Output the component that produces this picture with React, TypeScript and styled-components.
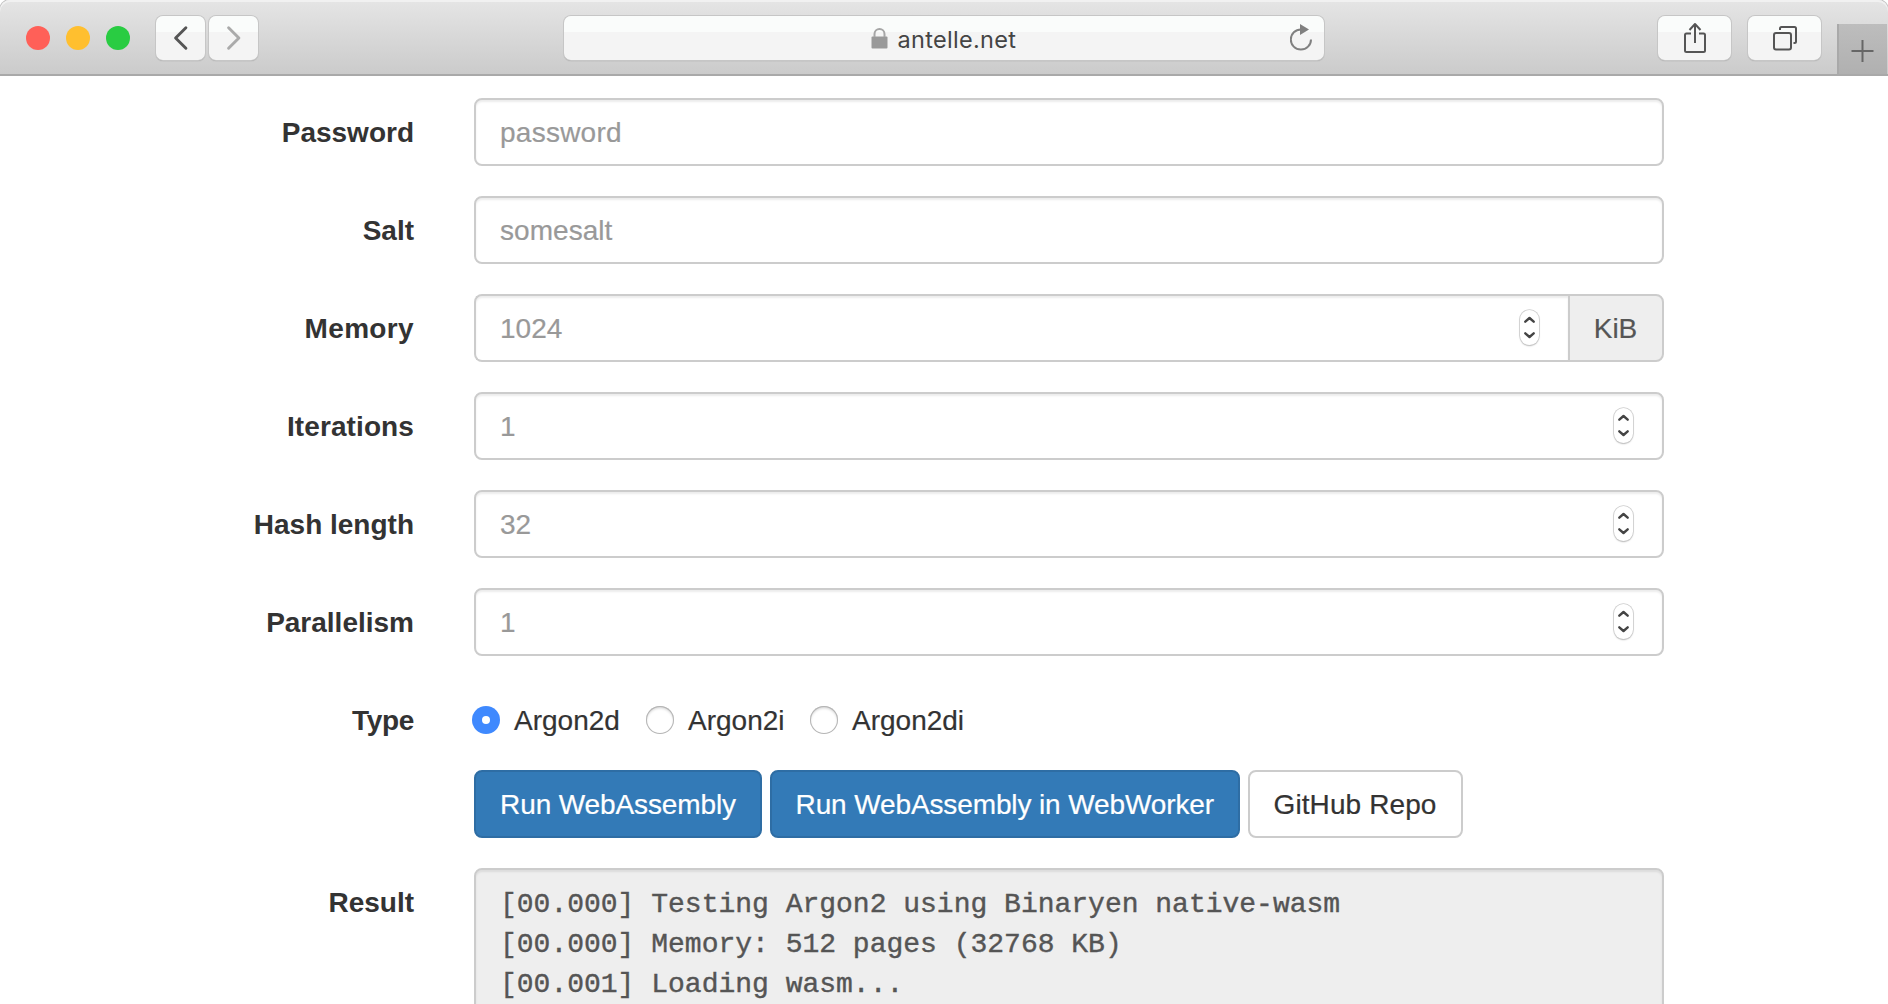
import React from 'react';
import styled, { createGlobalStyle } from 'styled-components';

const GlobalStyle = createGlobalStyle`
  *, *::before, *::after { box-sizing: border-box; }
  html, body { margin: 0; padding: 0; background: #fff; overflow: hidden; }
  body {
    font-family: "Liberation Sans", Arial, sans-serif;
    font-size: 28px;
    line-height: 40px;
    color: #333;
  }
`;

const Window = styled.div`
  width: 1888px;
  height: 1004px;
  overflow: hidden;
  display: flex;
  flex-direction: column;
`;

const Toolbar = styled.header`
  flex: none;
  height: 76px;
  display: flex;
  align-items: flex-start;
  padding-left: 26px;
  background: linear-gradient(#e5e5e5, #cbcbcb);
  border-bottom: 2px solid #a9a9a9;
  border-radius: 10px 10px 0 0;
  box-shadow: inset 0 2px 0 #f1f1f1, 0 0 0 1px #c4c4c4;
  clip-path: inset(0);
`;

const Lights = styled.div`
  display: flex;
  gap: 16px;
  margin-top: 26px;
`;

const Light = styled.span<{ $color: string }>`
  width: 24px;
  height: 24px;
  border-radius: 50%;
  background: ${(p) => p.$color};
`;

const ToolButton = styled.button<{ $width: number; $left: number }>`
  flex: none;
  width: ${(p) => p.$width}px;
  height: 44px;
  margin: 16px 0 0 ${(p) => p.$left}px;
  padding: 0;
  border: 0;
  border-radius: 7px;
  display: flex;
  align-items: center;
  justify-content: center;
  background: linear-gradient(#fafcfb 0 36%, #f4f4f4 37%);
  box-shadow: 0 0 0 1px #c6c6c6, 0 1px 1px #888;
`;

const AddressBar = styled.div`
  flex: none;
  width: 760px;
  height: 44px;
  margin: 16px 0 0 306px;
  border-radius: 7px;
  display: flex;
  align-items: center;
  padding: 0 10px 0 307px;
  background: linear-gradient(#fafcfb 0 36%, #f4f4f4 37%);
  box-shadow: 0 0 0 1px #c6c6c6, 0 1px 1px #888;
`;

const Host = styled.span`
  flex: 1;
  margin-left: 9.5px;
  padding-top: 3px;
  font-family: Inter, Roboto, sans-serif;
  font-size: 23.5px;
  line-height: 40px;
  letter-spacing: 0.3px;
  color: #444;
`;

const NewTab = styled.div`
  flex: none;
  width: 50px;
  height: 50px;
  margin: 24px 0 0 16px;
  border-left: 2px solid #a9a9a9;
  background: linear-gradient(#bdbdbd, #b0b0b0);
`;

const Page = styled.main`
  flex: 1;
  min-height: 0;
  width: 1888px;
  padding: 22px 224px 0 224px;
  display: flex;
  flex-direction: column;
  gap: 30px;
`;

const Row = styled.div<{ $height?: number }>`
  flex: none;
  height: ${(p) => (p.$height ? `${p.$height}px` : 'auto')};
  display: grid;
  grid-template-columns: 190px 1190px;
  column-gap: 60px;
`;

const Label = styled.label<{ $ls?: number }>`
  padding-top: 15px;
  text-align: right;
  font-weight: 700;
  white-space: nowrap;
  letter-spacing: ${(p) => p.$ls ?? 0}px;
`;

const Group = styled.div`
  display: flex;
`;

const Field = styled.div<{ $joined?: boolean }>`
  flex: 1;
  height: 68px;
  display: flex;
  align-items: center;
  justify-content: space-between;
  padding: 0 29.5px 0 24px;
  background: #fff;
  border: 2px solid #ccc;
  border-radius: ${(p) => (p.$joined ? '8px 0 0 8px' : '8px')};
  ${(p) => p.$joined && 'border-right: 0;'}
  box-shadow: inset 0 2px 2px rgba(0, 0, 0, 0.075);
`;

const Placeholder = styled.span<{ $ls?: number }>`
  padding-top: 2px;
  color: #999;
  -webkit-text-stroke: 0.2px #999;
  letter-spacing: ${(p) => p.$ls ?? 0}px;
`;

const Addon = styled.span`
  width: 96px;
  height: 68px;
  padding: 2px 1px 0 0;
  display: flex;
  align-items: center;
  justify-content: center;
  color: #555;
  -webkit-text-stroke: 0.2px #555;
  background: #eee;
  border: 2px solid #ccc;
  border-radius: 0 8px 8px 0;
`;

const StepperBox = styled.span`
  width: 19px;
  height: 35px;
  margin-top: -2px;
  display: flex;
  align-items: center;
  justify-content: center;
  border-radius: 9.5px;
  background: #fff;
  box-shadow: 0 0 0 0.8px #ccc, 0 1px 1.5px rgba(0, 0, 0, 0.35);
`;

const Options = styled.div`
  display: flex;
  align-items: flex-start;
  padding-top: 13px;
  margin-left: -2px;
`;

const Option = styled.label<{ $width: number }>`
  width: ${(p) => p.$width}px;
  display: flex;
  align-items: center;
  gap: 14px;
`;

const OptionText = styled.span`
  padding-top: 2px;
  -webkit-text-stroke: 0.2px #333;
`;

const Radio = styled.span<{ $on?: boolean }>`
  width: 28px;
  height: 28px;
  border-radius: 50%;
  display: flex;
  align-items: center;
  justify-content: center;
  background: ${(p) => (p.$on ? '#3f89fe' : '#fff')};
  box-shadow: ${(p) =>
    p.$on ? 'none' : 'inset 0 0 0 1px #b5b5b5, inset 0 2px 3px rgba(0,0,0,0.2)'};
  &::after {
    content: '';
    width: 8px;
    height: 8px;
    border-radius: 50%;
    background: #fff;
  }
`;

const Buttons = styled.div`
  grid-column: 2;
  display: flex;
  gap: 8px;
`;

const Button = styled.button<{ $primary?: boolean; $width: number; $ls?: number }>`
  width: ${(p) => p.$width}px;
  height: 68px;
  padding: 2px 0 0;
  font: inherit;
  white-space: nowrap;
  letter-spacing: ${(p) => p.$ls ?? 0}px;
  color: ${(p) => (p.$primary ? '#fff' : '#333')};
  -webkit-text-stroke: 0.2px ${(p) => (p.$primary ? '#fff' : '#333')};
  background: ${(p) => (p.$primary ? '#337ab7' : '#fff')};
  border: 2px solid ${(p) => (p.$primary ? '#2e6da4' : '#ccc')};
  border-radius: 8px;
`;

const Output = styled.pre`
  margin: 0;
  height: 300px;
  padding: 15px 24px;
  font-family: "Liberation Mono", "Courier New", monospace;
  font-size: 28px;
  line-height: 40px;
  color: #555;
  -webkit-text-stroke: 0.4px #555;
  background: #eee;
  border: 2px solid #ccc;
  border-radius: 8px;
  box-shadow: inset 0 2px 2px rgba(0, 0, 0, 0.075);
`;

const Stepper = () => (
  <StepperBox>
    <svg width="19" height="35" viewBox="0 0 19 35" fill="none" stroke="#444" strokeWidth="2.4" strokeLinecap="round" strokeLinejoin="round">
      <path d="M5.3 11.7L9.5 8L13.7 11.7" />
      <path d="M5.3 23.3L9.5 27L13.7 23.3" />
    </svg>
  </StepperBox>
);

interface FieldSpec {
  label: string;
  value: string;
  numeric?: boolean;
  unit?: string;
  labelLs?: number;
  valueLs?: number;
}

const fields: FieldSpec[] = [
  { label: 'Password', value: 'password', valueLs: 0.25 },
  { label: 'Salt', value: 'somesalt', valueLs: 0.05 },
  { label: 'Memory', value: '1024', numeric: true, unit: 'KiB', labelLs: 0.35 },
  { label: 'Iterations', value: '1', numeric: true, labelLs: 0.1 },
  { label: 'Hash length', value: '32', numeric: true },
  { label: 'Parallelism', value: '1', numeric: true },
];

export default function App() {
  return (
    <Window>
      <GlobalStyle />
      <Toolbar>
        <Lights>
          <Light $color="#ff6058" />
          <Light $color="#ffbf2f" />
          <Light $color="#29cc42" />
        </Lights>
        <ToolButton $width={49} $left={26}>
          <svg width="50" height="46" viewBox="0 0 50 46" fill="none" stroke="#555" strokeWidth="3" strokeLinecap="round" strokeLinejoin="round">
            <path d="M30.5 12.5L20 23L30.5 33.5" />
          </svg>
        </ToolButton>
        <ToolButton $width={49} $left={4}>
          <svg width="50" height="46" viewBox="0 0 50 46" fill="none" stroke="#aaa" strokeWidth="3" strokeLinecap="round" strokeLinejoin="round">
            <path d="M20 12.5L30.5 23L20 33.5" />
          </svg>
        </ToolButton>
        <AddressBar>
          <svg width="17" height="21" viewBox="0 0 17 21" fill="none">
            <rect x="0.5" y="8.5" width="16" height="12" rx="1" fill="#999" />
            <path d="M3.5 9V6a5 5 0 0 1 10 0V9" stroke="#a6a6a6" strokeWidth="2" />
          </svg>
          <Host>antelle.net</Host>
          <svg width="24" height="28" viewBox="0 0 24 28" fill="none">
            <path d="M11 5.4A10.1 10.1 0 1 0 21 15.5" stroke="#808080" strokeWidth="2" />
            <path d="M10 0L19 5.5L10 11Z" fill="#808080" />
          </svg>
        </AddressBar>
        <ToolButton $width={73} $left={334}>
          <svg width="24" height="32" viewBox="0 0 24 32" fill="none" stroke="#555" strokeWidth="2" strokeLinejoin="round">
            <path d="M8 11.5H3.5a1.5 1.5 0 0 0-1.5 1.5V28.5a1.5 1.5 0 0 0 1.5 1.5H20.5a1.5 1.5 0 0 0 1.5-1.5V13a1.5 1.5 0 0 0-1.5-1.5H16M12 21V2.5M6.5 8L12 2L17.5 8" />
          </svg>
        </ToolButton>
        <ToolButton $width={73} $left={17}>
          <svg width="26" height="26" viewBox="0 0 26 26" fill="none" stroke="#555" strokeWidth="2">
            <rect x="2" y="8" width="17" height="16.5" rx="2" />
            <path d="M8 5V3.5A1.5 1.5 0 0 1 9.5 2H22.5A1.5 1.5 0 0 1 24 3.5V16.5A1.5 1.5 0 0 1 22.5 18H21.5" />
          </svg>
        </ToolButton>
        <NewTab>
          <svg width="48" height="50" viewBox="0 0 48 50" stroke="#666" strokeWidth="2">
            <path d="M12.5 27H34.5M23.5 16V38" />
          </svg>
        </NewTab>
      </Toolbar>
      <Page>
        {fields.map((f) => (
          <Row key={f.label}>
            <Label $ls={f.labelLs}>{f.label}</Label>
            <Group>
              <Field $joined={!!f.unit}>
                <Placeholder $ls={f.valueLs}>{f.value}</Placeholder>
                {f.numeric && <Stepper />}
              </Field>
              {f.unit && <Addon>{f.unit}</Addon>}
            </Group>
          </Row>
        ))}
        <Row $height={54}>
          <Label $ls={-0.3}>Type</Label>
          <Options>
            <Option $width={174}><Radio $on /><OptionText>Argon2d</OptionText></Option>
            <Option $width={164}><Radio /><OptionText>Argon2i</OptionText></Option>
            <Option $width={180}><Radio /><OptionText>Argon2di</OptionText></Option>
          </Options>
        </Row>
        <Row>
          <Buttons>
            <Button $primary $width={288} $ls={-0.12}>Run WebAssembly</Button>
            <Button $primary $width={469.5} $ls={-0.12}>Run WebAssembly in WebWorker</Button>
            <Button $width={215} $ls={0.1}>GitHub Repo</Button>
          </Buttons>
        </Row>
        <Row>
          <Label>Result</Label>
          <Output>{`[00.000] Testing Argon2 using Binaryen native-wasm
[00.000] Memory: 512 pages (32768 KB)
[00.001] Loading wasm...`}</Output>
        </Row>
      </Page>
    </Window>
  );
}
